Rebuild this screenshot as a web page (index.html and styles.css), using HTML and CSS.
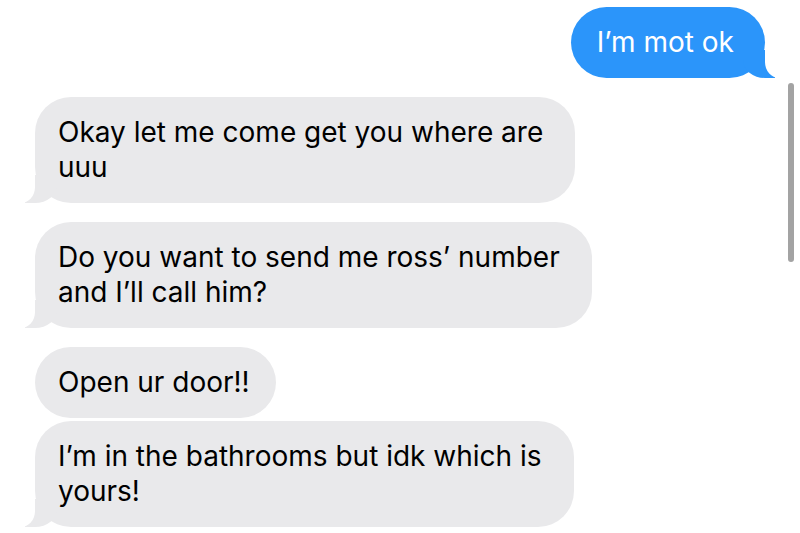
FILE: index.html
```
<!DOCTYPE html>
<html lang="en">
<head>
<meta charset="utf-8">
<title>Messages</title>
<link rel="stylesheet" href="styles.css">
</head>
<body>
<div class="thread">
  <div class="bubble sent tail">I’m mot ok</div>
  <div class="bubble recv tail multi">Okay let me come get you where are<br>uuu</div>
  <div class="bubble recv tail multi">Do you want to send me ross’ number<br>and I’ll call him?</div>
  <div class="bubble recv">Open ur door!!</div>
  <div class="bubble recv tail multi close">I’m in the bathrooms but idk which is<br>yours!</div>
</div>
<div class="scroll-indicator"></div>
</body>
</html>
```
FILE: styles.css
```
html, body {
  margin: 0;
  padding: 0;
  background: #ffffff;
}

body {
  width: 800px;
  height: 533px;
  overflow: hidden;
  position: relative;
  font-family: Inter, "Open Sans", "Liberation Sans", sans-serif;
}

.thread {
  display: flex;
  flex-direction: column;
  align-items: flex-start;
  gap: 19px;
  padding: 7px 35px 0 35px;
}

.bubble {
  position: relative;
  font-size: 28px;
  line-height: 35px;
  padding: 18px 26px 18px 23px;
  border-radius: 36px;
  white-space: nowrap;
}

.bubble.multi {
  padding-right: 32px;
}

.bubble.close {
  margin-top: -16px;
}

.recv {
  background: #e9e9eb;
  color: #000000;
}

.sent {
  align-self: flex-end;
  background: #2b95fa;
  color: #ffffff;
  padding: 18px 31px 18px 26px;
}

.tail::before,
.tail::after {
  content: "";
  position: absolute;
  bottom: 0;
  height: 28px;
}

.recv.tail::before {
  left: -10px;
  width: 32px;
  background: #e9e9eb;
  border-bottom-right-radius: 22px 18px;
  z-index: 0;
}

.recv.tail::after {
  left: -16px;
  width: 16px;
  background: #ffffff;
  border-bottom-right-radius: 14px 16px;
  z-index: 1;
}

.sent.tail::before {
  right: -10px;
  width: 32px;
  background: #2b95fa;
  border-bottom-left-radius: 22px 18px;
  z-index: 0;
}

.sent.tail::after {
  right: -16px;
  width: 16px;
  background: #ffffff;
  border-bottom-left-radius: 14px 16px;
  z-index: 1;
}

.scroll-indicator {
  position: absolute;
  left: 788px;
  top: 83px;
  width: 6px;
  height: 179px;
  border-radius: 3px;
  background: #a3a3a3;
}
```
